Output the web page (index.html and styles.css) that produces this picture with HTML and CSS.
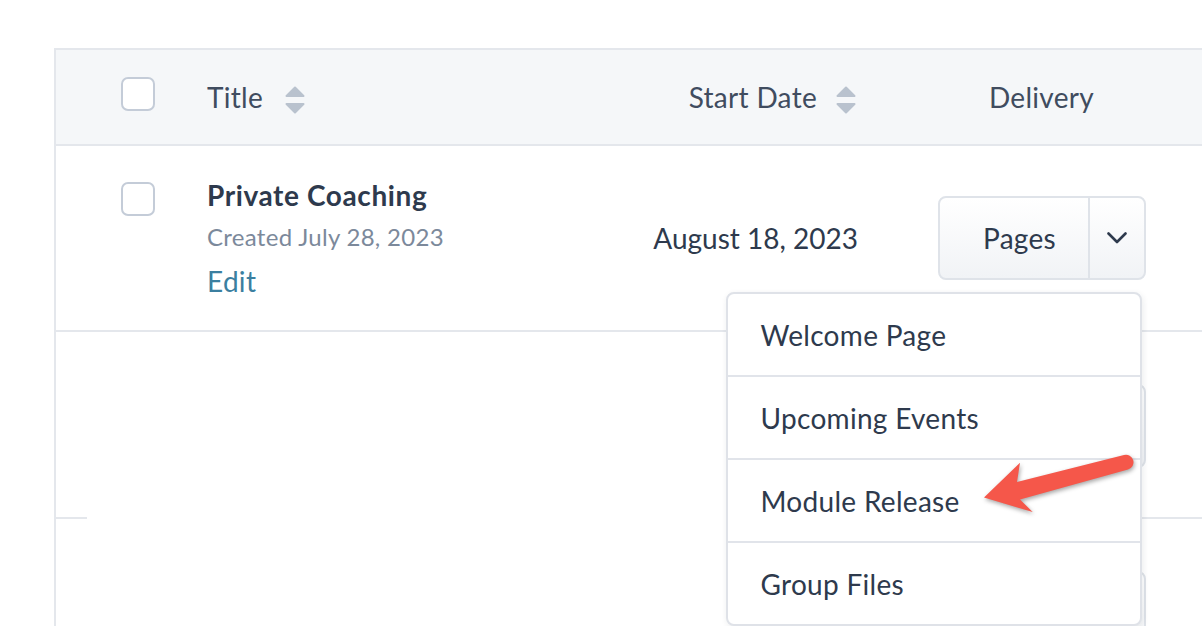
FILE: index.html
```html
<!DOCTYPE html>
<html lang="en">
<head>
<meta charset="utf-8">
<title>Offerings</title>
<link rel="stylesheet" href="styles.css">
</head>
<body>
<div class="table">
  <div class="row head">
    <div class="c-check"><span class="checkbox head-box"></span></div>
    <div class="c-title sortable"><span>Title</span>
      <svg class="sort" width="20" height="28" viewBox="0 0 20 28"><path d="M10 1.5 L18.5 10 H1.5 Z M1.5 18 H18.5 L10 26.5 Z" fill="#b9c2ce" stroke="#b9c2ce" stroke-width="2" stroke-linejoin="round"/></svg>
    </div>
    <div class="c-date sortable"><span>Start Date</span>
      <svg class="sort" width="20" height="28" viewBox="0 0 20 28"><path d="M10 1.5 L18.5 10 H1.5 Z M1.5 18 H18.5 L10 26.5 Z" fill="#b9c2ce" stroke="#b9c2ce" stroke-width="2" stroke-linejoin="round"/></svg>
    </div>
    <div class="c-del">Delivery</div>
  </div>

  <div class="row item">
    <div class="c-check"><span class="checkbox row-box"></span></div>
    <div class="c-title info">
      <div class="name">Private Coaching</div>
      <div class="created">Created July 28, 2023</div>
      <a class="edit" href="#">Edit</a>
    </div>
    <div class="c-date value">August 18, 2023</div>
    <div class="c-del cell">
      <div class="dd">
        <div class="btn-group">
          <span class="btn-main">Pages</span>
          <span class="btn-caret"><svg width="20" height="12" viewBox="0 0 20 12"><polyline points="1.5,1.5 10,10 18.5,1.5" fill="none" stroke="#2e3a4d" stroke-width="2.6" stroke-linecap="round" stroke-linejoin="round"/></svg></span>
        </div>
        <ul class="menu">
          <li>Welcome Page</li>
          <li>Upcoming Events</li>
          <li>Module Release</li>
          <li>Group Files</li>
        </ul>
      </div>
    </div>
  </div>

  <div class="row item cut">
    <div class="c-del cell">
      <div class="btn-group">
        <span class="btn-main">Pages</span>
        <span class="btn-caret"><svg width="20" height="12" viewBox="0 0 20 12"><polyline points="1.5,1.5 10,10 18.5,1.5" fill="none" stroke="#2e3a4d" stroke-width="2.6" stroke-linecap="round" stroke-linejoin="round"/></svg></span>
      </div>
    </div>
  </div>

  <div class="row item last">
    <div class="c-del cell">
      <div class="btn-group">
        <span class="btn-main"></span>
        <span class="btn-caret"></span>
      </div>
    </div>
  </div>
</div>

<svg class="arrow" width="1202" height="626" viewBox="0 0 1202 626">
  <path d="M984,497.5 L1020,462.7 L1017,482 L1124,455 A7.5,7.5 0 0 1 1128,469.5 L1020,499.5 L1032.7,512 Z" fill="#f5574a"/>
</svg>
</body>
</html>
```

FILE: styles.css
```css
html, body {
  margin: 0;
  padding: 0;
  background: #ffffff;
  overflow: hidden;
  width: 1202px;
  height: 626px;
}

body {
  font-family: Lato, "Noto Sans", sans-serif;
  color: #2e3a4d;
  font-size: 28px;
  line-height: 36px;
  letter-spacing: 0.3px;
}

.table {
  margin-left: 54px;
  margin-top: 48px;
  width: 1171px;
  border-left: 2px solid #e4e7ec;
  border-top: 2px solid #e4e7ec;
}

.row {
  display: grid;
  grid-template-columns: 86px 431px 220px 367px;
  padding-left: 65px;
  box-sizing: border-box;
}

.head {
  height: 96px;
  background: #f5f7f9;
  border-bottom: 2px solid #e4e7ec;
  align-items: center;
  color: #404c5f;
}

.checkbox {
  display: block;
  width: 34px;
  height: 34px;
  box-sizing: border-box;
  border: 2px solid #c4ccd8;
  border-radius: 7px;
  background: #ffffff;
}

.head-box {
  margin-bottom: 6px;
}

.sortable {
  display: flex;
  align-items: center;
  gap: 19px;
  white-space: nowrap;
}

.sort {
  display: block;
  margin-top: 6px;
}

.head .c-title .sort {
  margin-left: 3px;
}

.head .c-date {
  justify-content: flex-end;
  padding-right: 2px;
}

.head .c-del {
  text-align: center;
}

.item {
  height: 186px;
  border-bottom: 2px solid #e4e7ec;
  align-items: start;
}

.row-box {
  margin-top: 36px;
}

.info {
  padding-top: 31px;
  display: flex;
  flex-direction: column;
  align-items: flex-start;
  white-space: nowrap;
}

.name {
  font-weight: 700;
  letter-spacing: 0.6px;
  color: #2e3a4d;
}

.created {
  font-size: 24px;
  line-height: 32px;
  margin-top: 8px;
  color: #7c899b;
}

.edit {
  margin-top: 10px;
  color: #3b7fa0;
  text-decoration: none;
}

.value {
  align-self: center;
  text-align: right;
  white-space: nowrap;
  letter-spacing: 0;
}

.cell {
  grid-column: 4;
  align-self: center;
  display: flex;
  justify-content: center;
}

.dd {
  position: relative;
}

.btn-group {
  display: flex;
  height: 84px;
  box-sizing: border-box;
  border: 2px solid #dfe3e9;
  border-radius: 8px;
  background: linear-gradient(#ffffff, #f1f3f6);
}

.btn-main {
  width: 150px;
  box-sizing: border-box;
  padding-left: 12px;
  display: flex;
  align-items: center;
  justify-content: center;
  border-right: 2px solid #dfe3e9;
}

.btn-caret {
  width: 54px;
  display: flex;
  align-items: center;
  justify-content: center;
}

.btn-caret svg {
  display: block;
}

.menu {
  position: absolute;
  top: calc(100% + 12px);
  right: 4px;
  width: 416px;
  box-sizing: border-box;
  margin: 0;
  padding: 0;
  list-style: none;
  background: #ffffff;
  border: 2px solid #dfe2e8;
  border-radius: 8px;
  box-shadow: 1px 2px 6px rgba(30, 40, 60, 0.09);
  z-index: 5;
}

.menu li {
  height: 81px;
  display: flex;
  align-items: center;
  padding-left: 33px;
  color: #2e3a4d;
  white-space: nowrap;
}

.menu li + li {
  border-top: 2px solid #e1e4ea;
}

.cut {
  height: 187px;
  border-bottom: none;
  background:
    linear-gradient(#e4e7ec, #e4e7ec) left bottom / 31px 2px no-repeat,
    linear-gradient(#e4e7ec, #e4e7ec) right bottom / 300px 2px no-repeat;
}

.last {
  height: 188px;
  border-bottom: none;
}

.arrow {
  position: absolute;
  left: 0;
  top: 0;
  z-index: 10;
  pointer-events: none;
  filter: drop-shadow(1px 2px 2px rgba(0, 0, 0, 0.35));
}
```
